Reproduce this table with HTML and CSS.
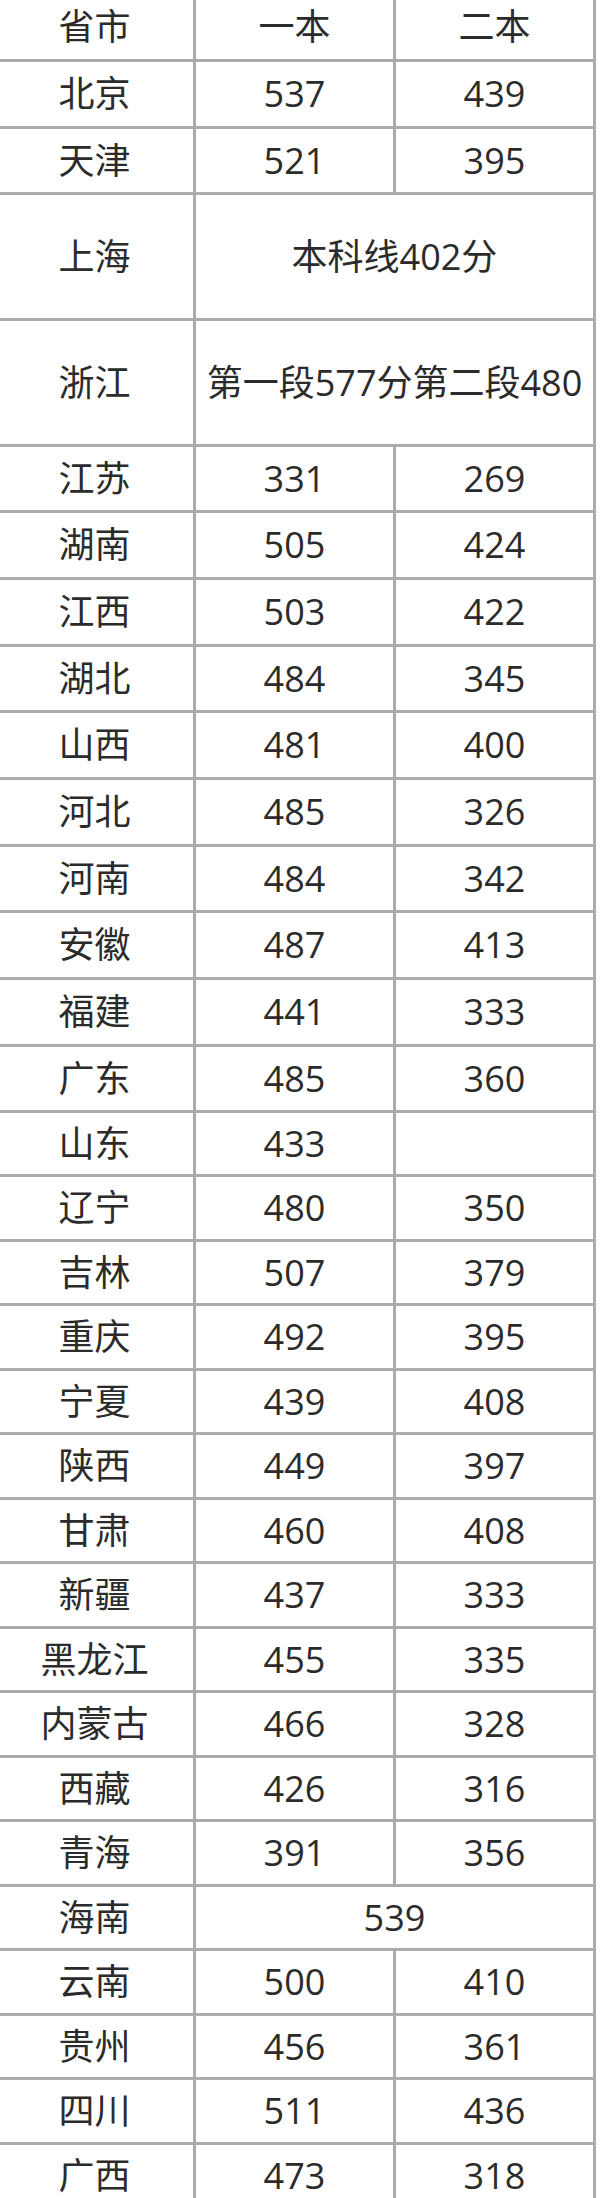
FILE: index.html
```html
<!DOCTYPE html>
<html lang="zh-CN">
<head>
<meta charset="utf-8">
<title>各省分数线</title>
<link rel="stylesheet" href="styles.css">
</head>
<body>
<div class="sheet">
<table class="scores">
<colgroup><col class="c"><col class="c"><col class="c"></colgroup>
<tbody>
<tr class="head"><td>省市</td><td>一本</td><td>二本</td></tr>
<tr><td>北京</td><td>537</td><td>439</td></tr>
<tr><td>天津</td><td>521</td><td>395</td></tr>
<tr class="tall"><td>上海</td><td colspan="2">本科线402分</td></tr>
<tr class="tall"><td>浙江</td><td colspan="2" class="tight">第一段577分第二段480</td></tr>
<tr><td>江苏</td><td>331</td><td>269</td></tr>
<tr><td>湖南</td><td>505</td><td>424</td></tr>
<tr><td>江西</td><td>503</td><td>422</td></tr>
<tr><td>湖北</td><td>484</td><td>345</td></tr>
<tr><td>山西</td><td>481</td><td>400</td></tr>
<tr><td>河北</td><td>485</td><td>326</td></tr>
<tr><td>河南</td><td>484</td><td>342</td></tr>
<tr><td>安徽</td><td>487</td><td>413</td></tr>
<tr><td>福建</td><td>441</td><td>333</td></tr>
<tr><td>广东</td><td>485</td><td>360</td></tr>
<tr><td>山东</td><td>433</td><td></td></tr>
<tr><td>辽宁</td><td>480</td><td>350</td></tr>
<tr><td>吉林</td><td>507</td><td>379</td></tr>
<tr><td>重庆</td><td>492</td><td>395</td></tr>
<tr><td>宁夏</td><td>439</td><td>408</td></tr>
<tr><td>陕西</td><td>449</td><td>397</td></tr>
<tr><td>甘肃</td><td>460</td><td>408</td></tr>
<tr><td>新疆</td><td>437</td><td>333</td></tr>
<tr><td>黑龙江</td><td>455</td><td>335</td></tr>
<tr><td>内蒙古</td><td>466</td><td>328</td></tr>
<tr><td>西藏</td><td>426</td><td>316</td></tr>
<tr><td>青海</td><td>391</td><td>356</td></tr>
<tr><td>海南</td><td colspan="2">539</td></tr>
<tr><td>云南</td><td>500</td><td>410</td></tr>
<tr><td>贵州</td><td>456</td><td>361</td></tr>
<tr><td>四川</td><td>511</td><td>436</td></tr>
<tr><td>广西</td><td>473</td><td>318</td></tr>
</tbody>
</table>
</div>
</body>
</html>
```
FILE: styles.css
```css
html, body {
  margin: 0;
  padding: 0;
  background: #ffffff;
}
.sheet {
  width: 600px;
  height: 2198px;
  overflow: hidden;
}
.scores {
  border-collapse: collapse;
  table-layout: fixed;
  margin: -8px 0 0 -7px;
  font-family: "Open Sans", "Noto Sans CJK SC", "Microsoft YaHei", sans-serif;
  font-size: 36px;
  color: #2b2b2b;
}
.scores .c {
  width: 200px;
}
.scores tr {
  height: 65px;
}
.scores tr:nth-child(-n+15) {
  height: 67px;
}
.scores tr:nth-child(3n):nth-child(-n+15) {
  height: 66px;
}
.scores tr:nth-child(2n+16) {
  height: 64px;
}
.scores tr.tall {
  height: 126px;
}
.scores td {
  border: 3px solid #ababab;
  padding: 0;
  text-align: center;
  vertical-align: middle;
  white-space: nowrap;
  line-height: 1;
}
.scores td.tight {
  letter-spacing: 0;
}
```
